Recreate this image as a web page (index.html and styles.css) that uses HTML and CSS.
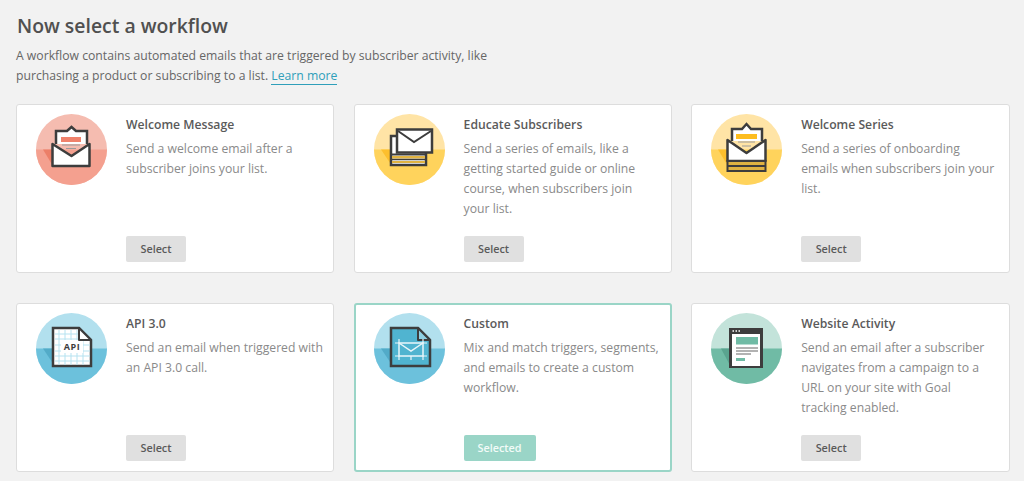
FILE: index.html
```html
<!DOCTYPE html>
<html lang="en">
<head>
    <meta charset="UTF-8">
    <meta name="viewport" content="width=device-width, initial-scale=1.0">
    <title>Now select a workflow</title>
    <link rel="stylesheet" href="styles.css">
</head>
<body>
    <h1>Now select a workflow</h1>
    <p class="intro">A workflow contains automated emails that are triggered by subscriber activity, like purchasing a product or subscribing to a list. <a href="#">Learn more</a></p>

    <div class="workflow-grid">
        <div class="card">
            <svg class="icon" viewBox="0 0 71 71">
                <circle cx="35.5" cy="35.5" r="35.5" fill="#f5bcb0"/>
                <path d="M0 35.5h71A35.5 35.5 0 0 1 0 35.5z" fill="#f4a08f"/>
                <path d="M7 35.5h9v15z" fill="#ec7f68"/>
                <path d="M20 30V17h11l4.500-4 4.500 4h11v13" fill="#fff" stroke="#3d3d3d" stroke-width="2.500"/>
                <rect x="25" y="23" width="20" height="5" fill="#f0826c"/>
                <path d="M26 31h18M30 34.500h10" stroke="#9a9a9a"/>
                <path d="M16.500 30l19 12 18-12v22h-37z" fill="#fff" stroke="#3d3d3d" stroke-width="2.500" stroke-linejoin="round"/>
            </svg>
            <div class="card-body">
                <h2>Welcome Message</h2>
                <p>Send a welcome email after a subscriber joins your list.</p>
                <button class="select-btn">Select</button>
            </div>
        </div>

        <div class="card">
            <svg class="icon" viewBox="0 0 71 71">
                <circle cx="35.5" cy="35.5" r="35.5" fill="#ffe4a6"/>
                <path d="M0 35.5h71A35.5 35.5 0 0 1 0 35.500z" fill="#ffd35c"/>
                <path d="M7 35.5h10v15z" fill="#fdbf2d"/>
                <rect x="17" y="22" width="35" height="29" fill="#fff" stroke="#3d3d3d" stroke-width="2.500"/>
                <path d="M17 40.500h35" stroke="#3d3d3d" stroke-width="2"/>
                <rect x="18" y="42" width="33" height="2.500" fill="#e0b341"/>
                <path d="M17 45.500h35" stroke="#3d3d3d" stroke-width="1.500"/>
                <rect x="18" y="47" width="33" height="2" fill="#e0b341"/>
                <rect x="23" y="15.500" width="35" height="23" fill="#fff" stroke="#3d3d3d" stroke-width="2.500"/>
                <path d="M24 17l16 11 17-11" fill="none" stroke="#3d3d3d" stroke-width="2"/>
            </svg>
            <div class="card-body">
                <h2>Educate Subscribers</h2>
                <p>Send a series of emails, like a getting started guide or online course, when subscribers join your list.</p>
                <button class="select-btn">Select</button>
            </div>
        </div>

        <div class="card">
            <svg class="icon" viewBox="0 0 71 71">
                <circle cx="35.5" cy="35.5" r="35.5" fill="#ffe4a6"/>
                <path d="M0 35.5h71A35.5 35.5 0 0 1 0 35.500z" fill="#ffd35c"/>
                <path d="M7 35.5h9v15z" fill="#fdbf2d"/>
                <path d="M21 27V15h10l4.500-5 4.500 5h11v12" fill="#fff" stroke="#3d3d3d" stroke-width="2.500"/>
                <rect x="25" y="20" width="21" height="5" fill="#fdbd1f"/>
                <path d="M27 28h17M31 32h9" stroke="#9a9a9a"/>
                <path d="M16.500 26l19 13 19-13v21h-38z" fill="#fff" stroke="#3d3d3d" stroke-width="2.500" stroke-linejoin="round"/>
                <rect x="16.500" y="47" width="38" height="10" fill="#e0b341" stroke="#3d3d3d" stroke-width="2"/>
                <path d="M16.500 52h38" stroke="#3d3d3d" stroke-width="2"/>
            </svg>
            <div class="card-body">
                <h2>Welcome Series</h2>
                <p>Send a series of onboarding emails when subscribers join your list.</p>
                <button class="select-btn">Select</button>
            </div>
        </div>

        <div class="card">
            <svg class="icon" viewBox="0 0 71 71">
                <circle cx="35.5" cy="35.5" r="35.5" fill="#b2e0ee"/>
                <path d="M0 35.5h71A35.5 35.5 0 0 1 0 35.500z" fill="#6cc1dc"/>
                <path d="M7 35.5h10v15z" fill="#52abc8"/>
                <path d="M17 15h26l12 12v26H17z" fill="#fff" stroke="#3d3d3d" stroke-width="2.500"/>
                <path d="M23 17v35M29 17v35M35 17v35M41 17v35M47 27v25M19 21h24M19 26h24M19 32h35M19 38h35M19 43h35M19 48h35" stroke="#b5e2f0" stroke-width="1"/>
                <rect x="25" y="27" width="22" height="13" fill="#fff"/>
                <text class="api-label" x="36" y="37" text-anchor="middle">API</text>
                <path d="M43 15v12h12z" fill="#fff" stroke="#3d3d3d" stroke-width="2" stroke-linejoin="round"/>
            </svg>
            <div class="card-body">
                <h2>API 3.0</h2>
                <p>Send an email when triggered with an API 3.0 call.</p>
                <button class="select-btn">Select</button>
            </div>
        </div>

        <div class="card card-selected">
            <svg class="icon" viewBox="0 0 71 71">
                <circle cx="35.5" cy="35.5" r="35.5" fill="#b2e0ee"/>
                <path d="M0 35.5h71A35.5 35.5 0 0 1 0 35.500z" fill="#6cc1dc"/>
                <path d="M7 35.5h10v15z" fill="#52abc8"/>
                <path d="M17 15h27l12 12v26H17z" fill="#50b4d0" stroke="#3d3d3d" stroke-width="2.500"/>
                <path d="M44 15v12h12z" fill="#8fd0e3" stroke="#3d3d3d" stroke-width="2" stroke-linejoin="round"/>
                <rect x="25" y="30" width="24" height="13" fill="none" stroke="#e8f6fa" stroke-width="1.500"/>
                <path d="M25 30l12 8 12-8" fill="none" stroke="#e8f6fa" stroke-width="1.500"/>
                <path d="M21 30h4M49 30h4M21 43h4M49 43h4M25 26v4M49 26v4M25 43v4M37 43v4M49 43v4" stroke="#e8f6fa" stroke-width="1.200"/>
            </svg>
            <div class="card-body">
                <h2>Custom</h2>
                <p>Mix and match triggers, segments, and emails to create a custom workflow.</p>
                <button class="select-btn selected">Selected</button>
            </div>
        </div>

        <div class="card">
            <svg class="icon" viewBox="0 0 71 71">
                <circle cx="35.5" cy="35.5" r="35.5" fill="#c3e3da"/>
                <path d="M0 35.5h71A35.5 35.5 0 0 1 0 35.500z" fill="#70bba5"/>
                <path d="M10 35.500h8v15z" fill="#5aa48f"/>
                <rect x="18" y="15" width="34" height="40" fill="#3d3d3d"/>
                <rect x="21" y="21" width="28" height="32" fill="#fff"/>
                <path d="M21.500 18h1.500M24.500 18h1.500M27.500 18h1.500" stroke="#fff" stroke-width="1.500"/>
                <rect x="25" y="24" width="22" height="7.500" fill="#70bba5"/>
                <path d="M25 35h22M25 38h22M25 41h15" stroke="#666" stroke-width="1.200"/>
                <rect x="25" y="45" width="9" height="3" fill="#70bba5"/>
            </svg>
            <div class="card-body">
                <h2>Website Activity</h2>
                <p>Send an email after a subscriber navigates from a campaign to a URL on your site with Goal tracking enabled.</p>
                <button class="select-btn">Select</button>
            </div>
        </div>
    </div>
</body>
</html>
```

FILE: styles.css
```css
body {
    margin: 0;
    padding: 12px 14px 0 16px;
    background-color: #f2f2f2;
    font-family: "Open Sans", sans-serif;
    color: #666;
    overflow: hidden;
}
h1 {
    margin: 0;
    padding-left: 1px;
    font-size: 19.4px;
    line-height: 28px;
    font-weight: 600;
    color: #505050;
}
.intro {
    margin: 6px 0 18px;
    width: 500px;
    font-size: 12.2px;
    line-height: 20px;
}
.intro a {
    color: #2f9fba;
    text-decoration: none;
    border-bottom: 1px solid #2f9fba;
}
.workflow-grid {
    display: grid;
    grid-template-columns: repeat(3, 318.4px);
    grid-auto-rows: 169px;
    gap: 30px 19.2px;
}
.card {
    display: flex;
    gap: 19px;
    padding: 9px 10px 10px 19px;
    background-color: #fff;
    border: 1px solid #ddd;
    border-radius: 3px;
}
.card-selected {
    padding: 8px 9px 9px 18px;
    border: 2px solid #9ad5c7;
}
.icon {
    flex: none;
    width: 71px;
    height: 71px;
}
.api-label {
    font-family: "Open Sans", sans-serif;
    font-size: 9px;
    font-weight: 700;
    letter-spacing: 0.5px;
    fill: #3d3d3d;
}
.card-body {
    display: flex;
    flex-direction: column;
    align-items: flex-start;
    flex: 1;
    padding-top: 1px;
}
.card-body h2 {
    margin: 0 0 4px;
    font-size: 12.2px;
    line-height: 20px;
    font-weight: 600;
    color: #5a5a5a;
}
.card-body p {
    margin: 0;
    font-size: 12.2px;
    line-height: 20px;
    color: #8a8a8a;
}
.select-btn {
    margin-top: auto;
    width: 60px;
    height: 26px;
    padding: 0 0 2px;
    background-color: #e0e0e0;
    border: none;
    border-radius: 2px;
    font-family: "Open Sans", sans-serif;
    font-size: 10.8px;
    font-weight: 600;
    color: #5a5a5a;
}
.select-btn.selected {
    width: 72px;
    background-color: #9ad5c7;
    color: #f2fbf8;
}
```
